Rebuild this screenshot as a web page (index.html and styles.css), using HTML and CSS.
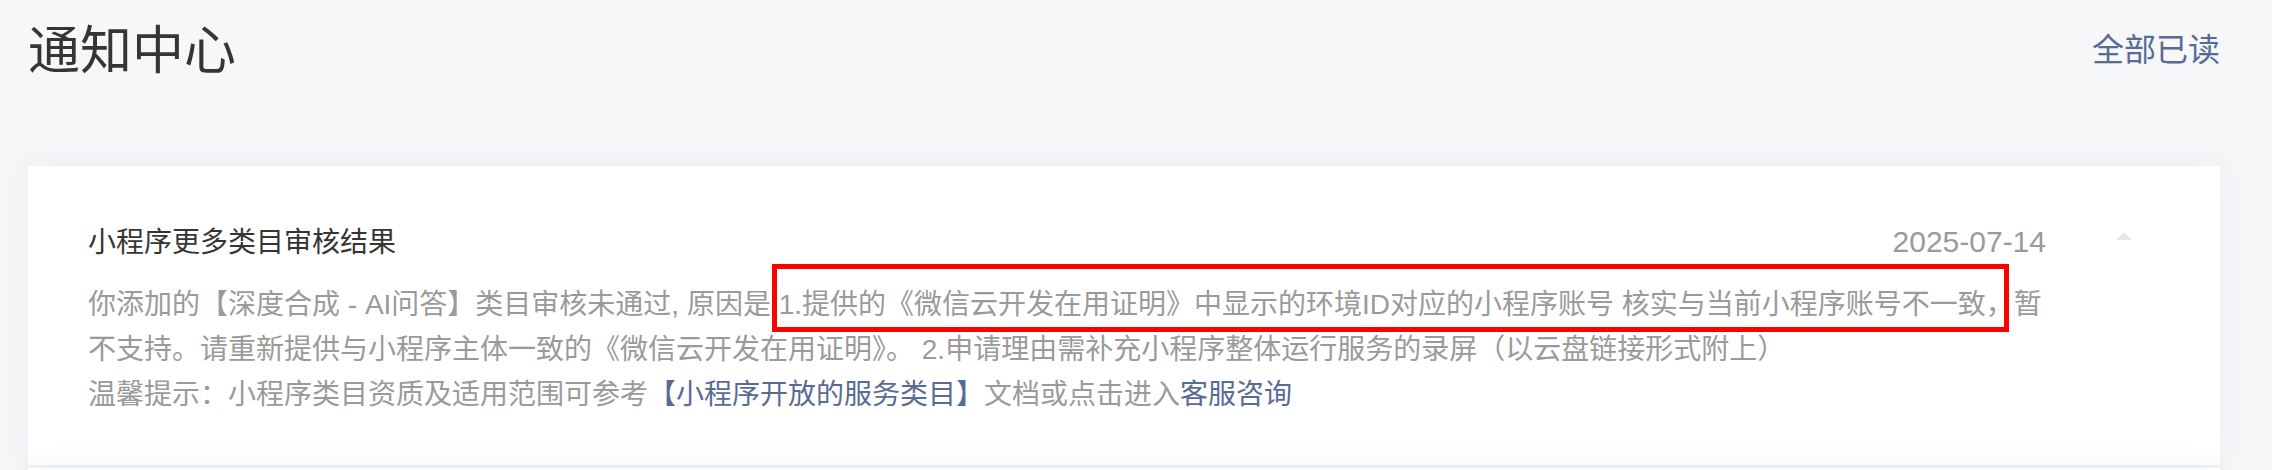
FILE: index.html
```html
<!DOCTYPE html>
<html>

<head>
    <title>通知中心</title>
    <meta charset="utf-8">
    <meta name="viewport" content="width=device-width, initial-scale=1.0">
    <link rel="stylesheet" href="styles.css">
</head>

<body>
    <header class="top">
        <h1>通知中心</h1>
        <a class="alle" href="#">全部已读</a>
    </header>

    <section id="liste">
        <article class="besked">
            <div class="indhold">
                <div class="hoved">
                    <h2>小程序更多类目审核结果</h2>
                    <span class="dato">2025-07-14</span>
                </div>
                <p class="tekst">你添加的【深度合成 - AI问答】类目审核未通过, 原因是:1.提供的《微信云开发在用证明》中显示的环境ID对应的小程序账号 核实与当前小程序账号不一致，暂不支持。请重新提供与小程序主体一致的《微信云开发在用证明》。 2.申请理由需补充小程序整体运行服务的录屏（以云盘链接形式附上）</p>
                <p class="tekst">温馨提示：小程序类目资质及适用范围可参考<a href="#">【小程序开放的服务类目】</a>文档或点击进入<a href="#">客服咨询</a></p>
            </div>
            <span class="fold"></span>

            <!-- markering lagt oven på skærmbilledet -->
            <div class="markering"></div>
        </article>

        <article class="besked"></article>
    </section>
</body>

</html>
```

FILE: styles.css
```css
body {
    margin: 0;
    background: #f6f7f9;
    font-family: "Liberation Sans", "Noto Sans CJK SC", sans-serif;
    overflow: hidden;
}

a {
    color: #576b95;
    text-decoration: none;
}

.top {
    display: flex;
    justify-content: space-between;
    align-items: flex-start;
    padding: 25px 52px 0 28px;
}

.top h1 {
    margin: 0;
    font-size: 52px;
    line-height: 52px;
    font-weight: normal;
    color: #353535;
}

.top .alle {
    margin-top: 9px;
    font-size: 32px;
    line-height: 32px;
}

#liste {
    margin: 89px 52px 0 28px;
    display: flex;
    flex-direction: column;
    gap: 3px;
}

.besked {
    position: relative;
    display: flex;
    align-items: flex-start;
    min-height: 150px;
    padding: 53px 88px 48px 60px;
    background: white;
    box-shadow: 0 0 28px rgba(40, 50, 80, 0.06);
}

.indhold {
    flex: 1;
}

.hoved {
    display: flex;
    justify-content: space-between;
    align-items: baseline;
}

.hoved h2 {
    margin: 0;
    font-size: 28px;
    line-height: 45px;
    font-weight: normal;
    color: #353535;
}

.dato {
    font-size: 30px;
    line-height: 45px;
    color: #9a9a9a;
}

.tekst {
    margin: 0;
    font-size: 28px;
    line-height: 45px;
    color: #9a9a9a;
}

.hoved + .tekst {
    margin-top: 17px;
}

.fold {
    margin: 13px 0 0 70px;
    width: 0;
    height: 0;
    border-left: 8px solid transparent;
    border-right: 8px solid transparent;
    border-bottom: 8px solid #e5e5ea;
}

.markering {
    position: absolute;
    left: 744px;
    top: 98px;
    width: 1237px;
    height: 68px;
    box-sizing: border-box;
    border: 5px solid #ff0000;
}
```
